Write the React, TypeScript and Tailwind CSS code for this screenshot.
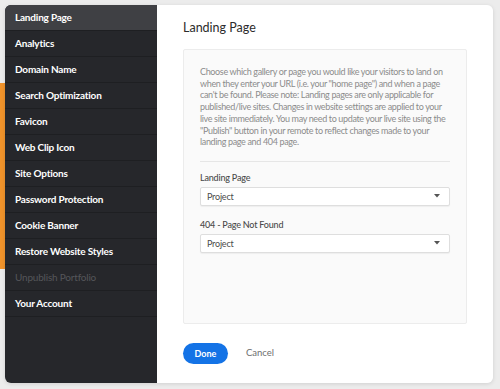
const items = [
  'Landing Page',
  'Analytics',
  'Domain Name',
  'Search Optimization',
  'Favicon',
  'Web Clip Icon',
  'Site Options',
  'Password Protection',
  'Cookie Banner',
  'Restore Website Styles',
  'Unpublish Portfolio',
  'Your Account',
];

function Select({ label }: { label: string }) {
  return (
    <div className="flex flex-col">
      <div className="text-[9px] leading-[12px] tracking-[-0.2px] text-[#4b4b4b] font-medium">{label}</div>
      <div className="mt-[3px] h-[19px] bg-white border border-[#dedede] rounded-[2px] shadow-[0_1px_1px_rgba(0,0,0,0.05)] flex items-center justify-between pl-[6px] pr-[9px]">
        <span className="text-[9px] tracking-[-0.2px] text-[#4b4b4b]">Project</span>
        <svg width="6" height="4" viewBox="0 0 6 4">
          <path d="M0 0h6L3 3.5z" fill="#555" />
        </svg>
      </div>
    </div>
  );
}

export default function App() {
  return (
    <div
      className="w-[500px] h-[389px] bg-[#ececec] flex overflow-hidden"
      style={{ fontFamily: 'Lato, "Open Sans", sans-serif' }}
    >
      <div className="w-[5px] flex flex-col shrink-0">
        <div className="h-[83px]" />
        <div className="h-[186px] bg-[#f0932b]" />
      </div>
      <div className="pt-[5px]">
        <div className="w-[488px] h-[378px] flex rounded-[6px] shadow-[0_1px_4px_rgba(0,0,0,0.12)]">
          <div className="w-[152px] bg-[#26272b] rounded-l-[6px] flex flex-col overflow-hidden">
            {items.map((item, i) => (
              <div
                key={item}
                className={
                  'h-[26px] flex items-center pl-[10px] border-b border-[#1e1f22] text-[10px] tracking-[-0.2px] font-bold ' +
                  (i === 0 ? 'bg-[#3f4044] text-white' : i === 10 ? 'text-[#55565a] font-normal' : 'text-white')
                }
              >
                {item}
              </div>
            ))}
          </div>
          <div className="flex-1 bg-white rounded-r-[6px] flex flex-col px-[26px] pt-[15px]">
            <h1 className="text-[12.5px] leading-[16px] text-[#2c2c2c]">Landing Page</h1>
            <div className="mt-[13px] h-[275px] bg-[#fafafa] border border-[#ececec] rounded-[2px] px-[16px] pt-[16px]">
              <p className="text-[9px] leading-[11.7px] tracking-[-0.35px] text-[#8c8c8c]">
                Choose which gallery or page you would like your visitors to land on when they enter your URL (i.e. your "home page") and when a page can't be found. Please note: Landing pages are only applicable for published/live sites. Changes in website settings are applied to your live site immediately. You may need to update your live site using the "Publish" button in your remote to reflect changes made to your landing page and 404 page.
              </p>
              <div className="mt-[13px] border-t border-[#e6e6e6]" />
              <div className="mt-[10px] flex flex-col gap-[13px]">
                <Select label="Landing Page" />
                <Select label="404 - Page Not Found" />
              </div>
            </div>
            <div className="mt-[19px] flex items-center gap-[18px]">
              <button className="w-[45px] h-[21px] rounded-full bg-[#1473e6] text-white text-[9px] font-bold">
                Done
              </button>
              <span className="text-[9.5px] text-[#6e6e6e]">Cancel</span>
            </div>
          </div>
        </div>
      </div>
    </div>
  );
}
